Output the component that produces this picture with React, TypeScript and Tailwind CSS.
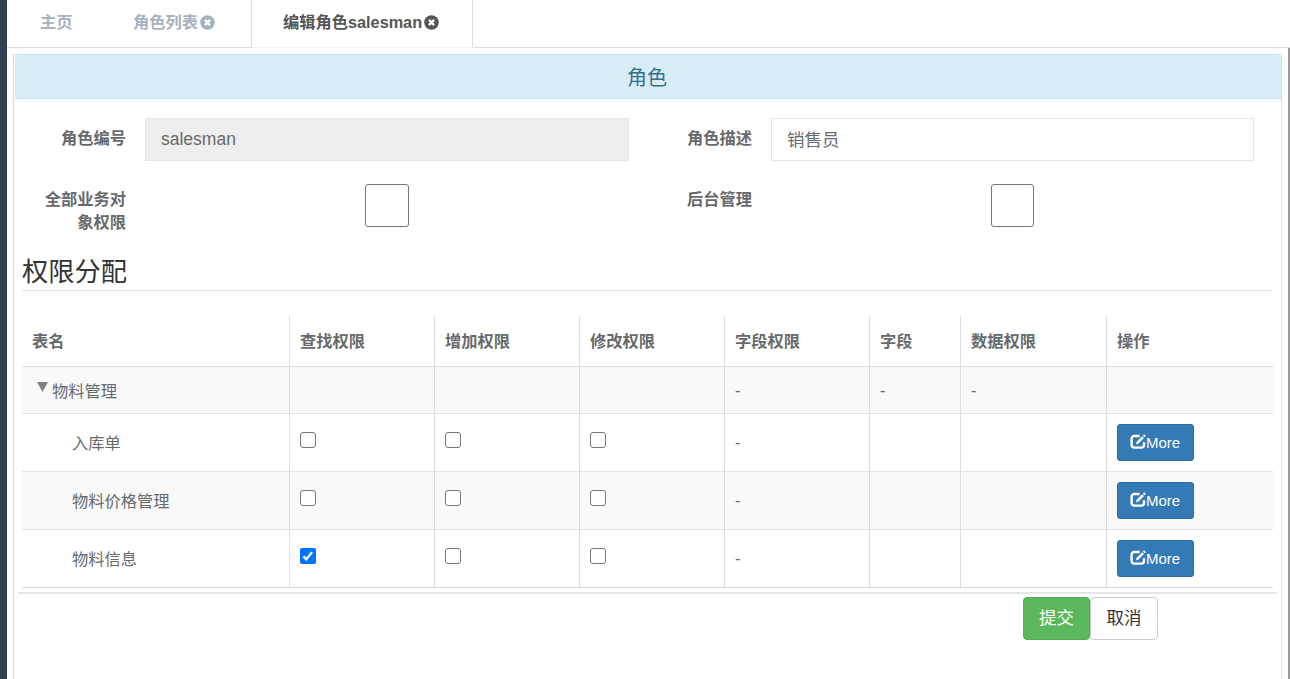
const columns = ["表名", "查找权限", "增加权限", "修改权限", "字段权限", "字段", "数据权限", "操作"];

const rows = [
  { id: 1, name: "入库单", find: false, add: false, edit: false },
  { id: 2, name: "物料价格管理", find: false, add: false, edit: false },
  { id: 3, name: "物料信息", find: true, add: false, edit: false },
];

const cell = "border-b border-b-[#e4e4e4] border-r border-r-[#ddd] px-2.5 last:border-r-0";

const RemoveSign = () => (
  <svg viewBox="0 0 15 15" className="ml-0.5 h-[15px] w-[15px]" fill="currentColor">
    <circle cx="7.5" cy="7.5" r="7.3" />
    <path d="M4.9 4.9l5.2 5.2M10.1 4.9l-5.2 5.2" stroke="#fff" strokeWidth="2.2" />
  </svg>
);

const EditIcon = () => (
  <svg viewBox="0 0 16 15" className="-mt-0.5 h-[15px] w-4 shrink-0" fill="none">
    <path
      d="M9.6 2H4.2A2.6 2.6 0 0 0 1.6 4.6v6.4a2.6 2.6 0 0 0 2.6 2.6h7.2A2.6 2.6 0 0 0 14 11V8.2"
      stroke="currentColor"
      strokeWidth="2.4"
    />
    <path d="M5.8 10.6l.9-2.9 5.5-5.5 1.8 1.8-5.5 5.5z" fill="currentColor" />
    <path d="M12.9 1.5L14.1.3l1.8 1.8-1.2 1.2z" fill="currentColor" />
  </svg>
);

const Checkbox = ({ checked }: { checked: boolean }) => (
  <span className="-mt-[5px] block h-4 w-4">
    {checked ? (
      <svg viewBox="0 0 16 16" className="h-4 w-4">
        <rect width="16" height="16" rx="2" fill="#0075ff" />
        <path d="M3.4 8.4l2.9 2.9 5.8-7.2" fill="none" stroke="#fff" strokeWidth="2.3" />
      </svg>
    ) : (
      <span className="block h-4 w-4 rounded-[3px] border border-[#767676] bg-white" />
    )}
  </span>
);

const App = () => {
  return (
    <div className="flex h-[679px] w-[1290px] overflow-hidden bg-white font-['Liberation_Sans','Noto_Sans_CJK_SC',sans-serif] text-[16.25px] leading-[23px] text-[#676a6c]">
      <aside className="w-[7px] shrink-0 bg-[#2f4050]" />

      <div className="flex flex-1 flex-col">
        {/* Tabs */}
        <nav className="flex h-12 shrink-0 font-bold text-[#a7b1c2]">
          <div className="w-[94px] border-b border-[#ddd] pt-[11px] pl-[33px]">主页</div>
          <div className="flex w-[150px] items-start border-b border-[#ddd] pt-[11px] pl-8">
            角色列表
            <span className="mt-1"><RemoveSign /></span>
          </div>
          <div className="flex w-[222px] items-start border-x border-b border-x-[#ddd] border-b-[#f3f3f4] pt-[11px] pl-[31px] text-[#555]">
            编辑角色salesman
            <span className="mt-1"><RemoveSign /></span>
          </div>
          <div className="flex-1 border-b border-[#ddd]" />
        </nav>

        <div className="flex flex-1 justify-between border-r-2 border-[#999] pt-1.5 pr-1.5 pl-1.5">
          {/* Panel */}
          <main className="w-[1269px] border border-b-0 border-[#bce8f1]">
            <h3 className="ml-px h-11 rounded-t-[3px] border-b border-[#bce8f1] bg-[#d9edf7] pt-3 text-center text-[20px] leading-[22px] text-[#31708f]">
              <span className="mr-0.5">角色</span>
            </h3>

            <form className="grid grid-cols-[626px_626px] pt-[19px] pl-2">
              <div className="flex">
                <label className="w-[104px] pt-[9px] text-right font-bold">角色编号</label>
                <div className="ml-[19px] flex h-[43px] w-[484px] items-center border border-[#e5e6e7] bg-[#eee] px-[15px] text-[17.5px]">
                  salesman
                </div>
              </div>
              <div className="flex">
                <label className="w-[104px] pt-[9px] text-right font-bold">角色描述</label>
                <div className="ml-[19px] flex h-[43px] w-[483px] items-center border border-[#e5e6e7] bg-white px-[15px] pt-px text-[17.5px]">
                  销售员
                </div>
              </div>
              <div className="mt-[23px] flex h-[47px]">
                <label className="w-[104px] pt-1 pl-5 text-right font-bold">全部业务对象权限</label>
                <div className="ml-[239px] h-[43px] w-[44px] rounded-[3px] border border-[#767676]" />
              </div>
              <div className="mt-[23px] flex h-[47px]">
                <label className="w-[104px] pt-1 text-right font-bold">后台管理</label>
                <div className="ml-[239px] h-[43px] w-[43px] rounded-[3px] border border-[#767676]" />
              </div>
            </form>

            <h2 className="mx-2 mt-[22px] h-[38px] w-[1251px] border-b border-[#e4e4e4] pt-1 text-[26.25px] leading-[30px] text-[#333]">
              权限分配
            </h2>

            <table className="mt-[25px] ml-2 w-[1251px] table-fixed border-separate border-spacing-0">
              <colgroup>
                <col className="w-[268px]" />
                <col className="w-[145px]" />
                <col className="w-[145px]" />
                <col className="w-[145px]" />
                <col className="w-[145px]" />
                <col className="w-[91px]" />
                <col className="w-[146px]" />
                <col className="w-[166px]" />
              </colgroup>
              <thead>
                <tr className="h-[51px] text-left">
                  {columns.map((column) => (
                    <th key={column} className="border-r border-b border-[#ddd] px-2.5 last:border-r-0">
                      {column}
                    </th>
                  ))}
                </tr>
              </thead>
              <tbody>
                <tr className="h-[47px] bg-[#f9f9f9]">
                  <td className={cell}>
                    <div className="flex items-start pt-0.5 pl-[5px]">
                      <svg viewBox="0 0 11 10" className="mt-0.5 mr-1 h-[10px] w-[11px]" fill="#808080">
                        <path d="M0 0h11L5.5 10z" />
                      </svg>
                      物料管理
                    </div>
                  </td>
                  <td className={cell} />
                  <td className={cell} />
                  <td className={cell} />
                  <td className={cell}>-</td>
                  <td className={cell}>-</td>
                  <td className={cell}>-</td>
                  <td className={cell} />
                </tr>
                {rows.map((row) => (
                  <tr key={row.id} className="h-[58px] even:bg-white odd:bg-[#f9f9f9] last:*:border-b-[#ddd]">
                    <td className={cell}>
                      <div className="pt-0.5 pl-10">{row.name}</div>
                    </td>
                    <td className={cell}><Checkbox checked={row.find} /></td>
                    <td className={cell}><Checkbox checked={row.add} /></td>
                    <td className={cell}><Checkbox checked={row.edit} /></td>
                    <td className={cell}>-</td>
                    <td className={cell} />
                    <td className={cell} />
                    <td className={cell}>
                      <button className="flex h-[37px] w-[77px] items-center rounded-[3px] border border-[#2e6da4] bg-[#337ab7] pl-3 text-[15px] text-white">
                        <EditIcon />
                        More
                      </button>
                    </td>
                  </tr>
                ))}
              </tbody>
            </table>

            {/* Actions */}
            <div className="mt-1 ml-1 flex w-[1259px] border-t-2 border-[#e5e5e5] pt-[3px] pl-[1005px] text-[17.5px]">
              <button className="h-[43px] w-[67px] rounded-[4px] border border-[#4cae4c] bg-[#5cb85c] text-white">提交</button>
              <button className="h-[43px] w-[68px] rounded-[4px] border border-[#ccc] bg-white text-[#333]">取消</button>
            </div>
          </main>
        </div>
      </div>
    </div>
  );
};

export default App;
